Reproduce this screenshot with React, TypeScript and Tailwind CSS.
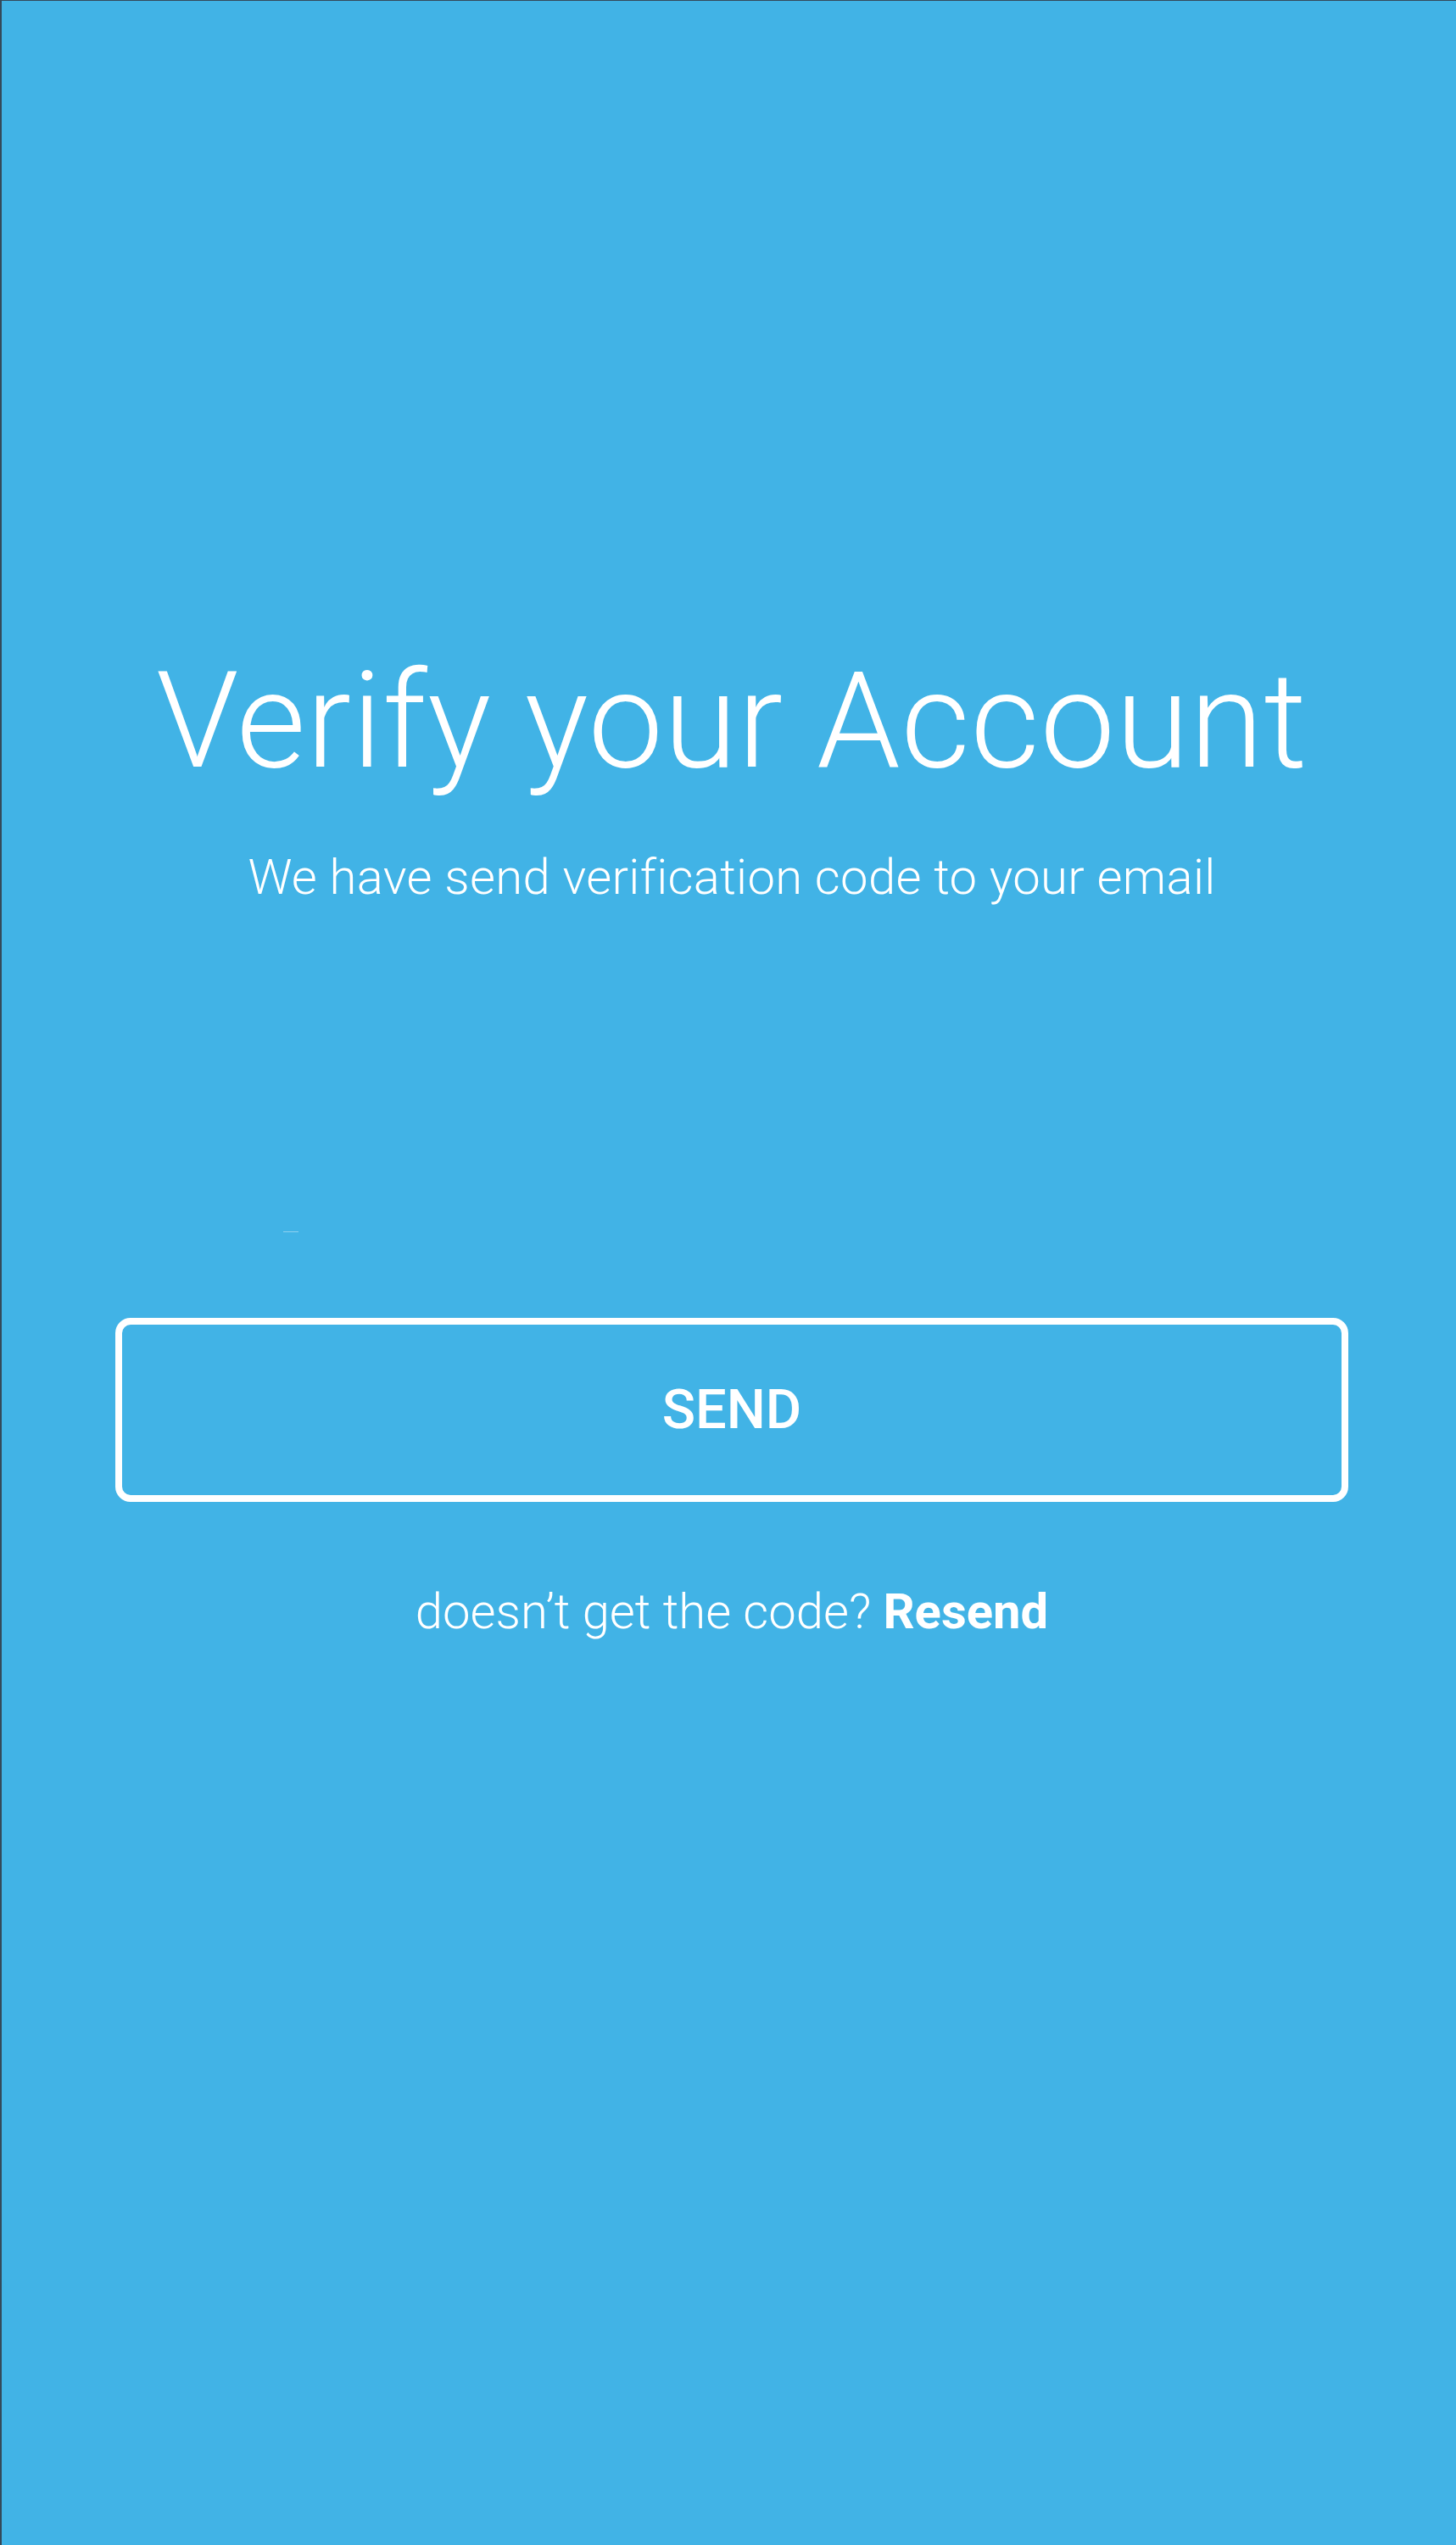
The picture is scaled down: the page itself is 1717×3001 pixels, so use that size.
export default function App() {
  return (
    <div
      className="min-h-[3001px] w-full bg-[#41b3e6] border-t border-l-2 border-[#34495a] text-white"
      style={{ fontFamily: 'Roboto, "Noto Sans", sans-serif' }}
    >
      <div className="pl-[134px] pr-[127px] pt-[770px] flex flex-col items-stretch text-center">
        <h1 className="text-[158px] leading-none font-light tracking-[0.6px]">Verify your Account</h1>
        <p className="mt-[76px] text-[58px] leading-none font-light tracking-[0.3px]">
          We have send verification code to your email
        </p>

        {/* faint leftover field underline */}
        <div className="mt-[389px] ml-[198px] h-px w-[18px] bg-white/40" />

        <button className="mt-[101px] h-[217px] w-full rounded-[18px] border-[8px] border-white flex items-center justify-center">
          <span className="text-[65px] leading-none font-medium">SEND</span>
        </button>

        <p className="mt-[100px] text-[58px] leading-none font-light">
          doesn’t get the code? <span className="font-bold">Resend</span>
        </p>
      </div>
    </div>
  );
}
